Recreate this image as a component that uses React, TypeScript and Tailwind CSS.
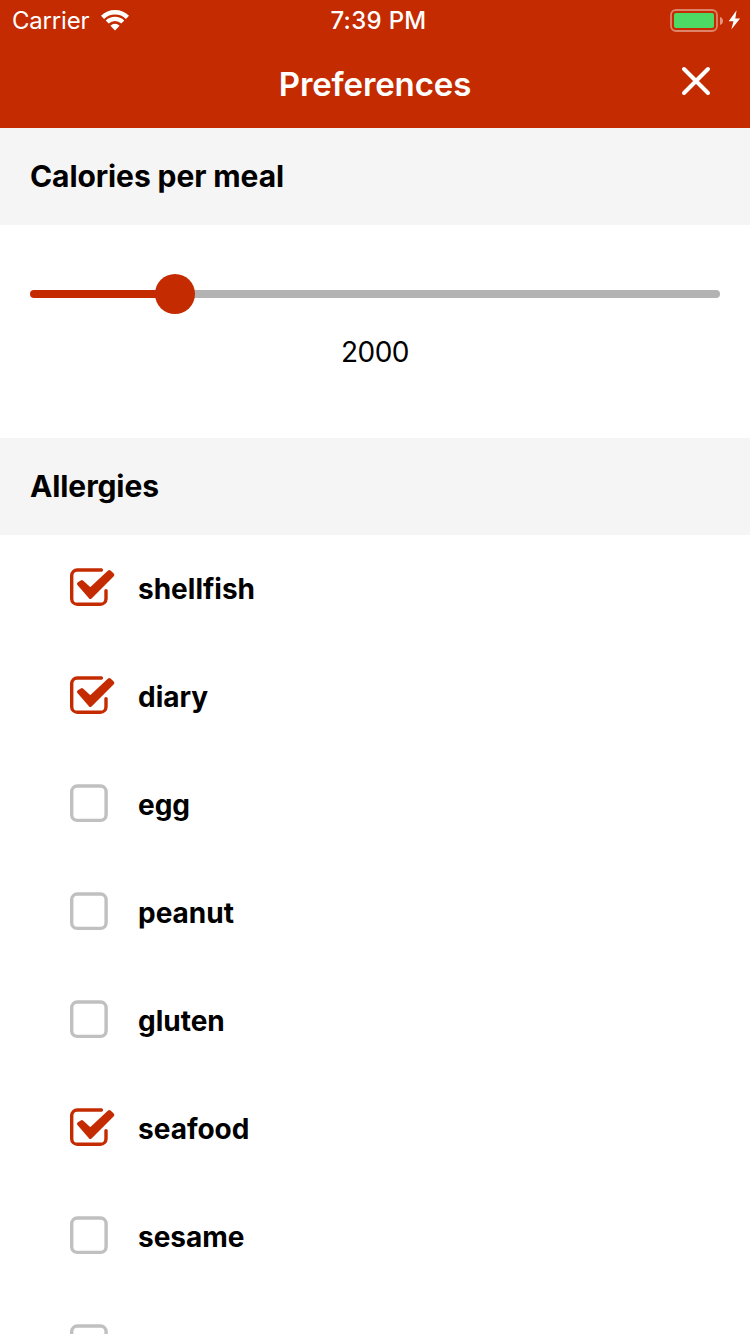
import React from "react";

const allergies = [
  { name: "shellfish", checked: true },
  { name: "diary", checked: true },
  { name: "egg", checked: false },
  { name: "peanut", checked: false },
  { name: "gluten", checked: false },
  { name: "seafood", checked: true },
  { name: "sesame", checked: false },
  { name: "", checked: false },
];

function CheckIcon({ checked }: { checked: boolean }) {
  return (
    <svg width="48" height="42" viewBox="0 0 48 42" fill="none" className="mb-1 shrink-0" aria-hidden="true">
      {checked ? (
        <>
          <path
            d="M33.4 4H9.3A5.6 5.6 0 0 0 3.7 9.6V32.7A5.6 5.6 0 0 0 9.3 38.3H32.4A5.6 5.6 0 0 0 38 32.7V24.6"
            stroke="#c42b00"
            strokeWidth="3.4"
            strokeLinecap="round"
          />
          <path
            d="M10.8 17.8L13.8 15.900L22.300 23.500L41.300 5.900L44.500 8.900L22.300 31.200Z"
            fill="#c42b00"
            stroke="#c42b00"
            strokeWidth="3.6"
            strokeLinejoin="round"
          />
        </>
      ) : (
        <rect x="3.7" y="4" width="34.4" height="34.4" rx="5.6" stroke="#c0c0c0" strokeWidth="3.4" />
      )}
    </svg>
  );
}

function WifiIcon() {
  return (
    <svg width="28" height="21" viewBox="0 0 28 21" fill="none" className="mb-[2px]" aria-hidden="true">
      <path d="M1.500 7.400a17.900 17.900 0 0 1 25 0" stroke="white" strokeWidth="4.400" />
      <path d="M6.200 12.100a11.200 11.200 0 0 1 15.600 0" stroke="white" strokeWidth="4.200" />
      <path d="M14 20.400L9.400 15.800a6.400 6.400 0 0 1 9.200 0Z" fill="white" />
    </svg>
  );
}

function BatteryIcon() {
  return (
    <svg width="72" height="24" viewBox="0 0 72 24" fill="none" aria-hidden="true">
      <rect x="1" y="1" width="46" height="21" rx="5" stroke="white" strokeOpacity="0.42" strokeWidth="1.8" />
      <rect x="4" y="4" width="40" height="15" rx="2" fill="#4cd964" />
      <path d="M50 8v8c2-.6 3-2.200 3-4s-1-3.400-3-4Z" fill="white" fillOpacity="0.5" />
      <path d="M66.600 1.300L58.700 12.200H63.500L61.300 20.500L70.100 9.400H65.300Z" fill="white" />
    </svg>
  );
}

function SectionTitle({ children }: { children: string }) {
  return (
    <h2 className="flex h-[97px] items-center bg-[#f5f5f5] pl-[30px] text-[30px] font-bold tracking-[-0.1px]">
      {children}
    </h2>
  );
}

export default function App() {
  return (
    <main className="h-[1334px] w-[750px] overflow-hidden bg-white font-['Inter',sans-serif] text-black">
      <header className="h-32 bg-[#c42b00] text-white">
        <div className="grid h-10 grid-cols-[1fr_auto_1fr] items-center pl-[12px] pr-[8px] text-2xl">
          <div className="flex items-center gap-[12px] pt-0.5">
            <span className="tracking-[-0.2px]">Carrier</span>
            <WifiIcon />
          </div>
          <span className="pl-[3px] pt-0.5 font-medium tracking-[0.3px]">7:39 PM</span>
          <div className="flex justify-end pt-0.5">
            <BatteryIcon />
          </div>
        </div>
        <div className="grid h-[88px] grid-cols-[1fr_auto_1fr] items-center">
          <h1 className="col-start-2 pt-[2px] text-[33px] font-semibold tracking-[-0.1px]">Preferences</h1>
          <button className="mb-[6px] mr-[39px] justify-self-end" aria-label="Close">
            <svg width="30" height="30" viewBox="0 0 30 30" fill="none">
              <path d="M3 3L27 27M27 3L3 27" stroke="white" strokeWidth="4" strokeLinecap="round" />
            </svg>
          </button>
        </div>
      </header>
      <SectionTitle>Calories per meal</SectionTitle>
      <section className="flex h-[213px] flex-col px-[30px] pt-[49px]">
        <div className="flex h-10 items-center">
          <div className="h-2 w-[126px] rounded-l-full bg-[#c42b00]" />
          <div className="relative -mx-px size-10 shrink-0 rounded-full bg-[#c42b00]" />
          <div className="h-2 flex-1 rounded-r-full bg-[#b3b3b3]" />
        </div>
        <p className="mt-[17px] text-center text-[28px] leading-[42px] tracking-[-0.5px]">2000</p>
      </section>
      <SectionTitle>Allergies</SectionTitle>
      {allergies.map((allergy, index) => (
        <div key={index} className="flex h-[108px] items-center pl-[68px] text-[28px] font-bold">
          <CheckIcon checked={allergy.checked} />
          <span className="ml-[22px]">{allergy.name}</span>
        </div>
      ))}
    </main>
  );
}
